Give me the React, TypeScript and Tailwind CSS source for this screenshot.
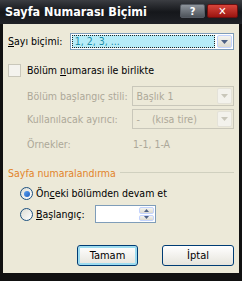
import React from 'react';

const font = { fontFamily: '"DejaVu Sans Condensed", "Liberation Sans", sans-serif' };

function Arrow({ disabled = false }: { disabled?: boolean }) {
  return (
    <div
      className={`w-[15px] h-full flex items-center justify-center rounded-[2px] border ${
        disabled ? 'border-[#e4e2d8] bg-[#f3f2ec]' : 'border-[#c3d3fd] bg-gradient-to-b from-[#f4f4f0] to-[#dcdad0]'
      }`}
    >
      <svg width="7" height="4" viewBox="0 0 7 4">
        <path d="M0 0h7L3.5 4z" fill={disabled ? '#c9c7ba' : '#4d6185'} />
      </svg>
    </div>
  );
}

function DisabledSelect({ text }: { text: string }) {
  return (
    <div className="w-[102px] h-[20px] border border-[#c9c7ba] bg-[#ece9d8] flex items-center p-[1px]">
      <span className="flex-1 pl-[2px] text-[#aca899] whitespace-pre">{text}</span>
      <Arrow disabled />
    </div>
  );
}

export default function App() {
  return (
    <div className="w-[242px] h-[281px] bg-[#111] flex flex-col text-[10.5px] leading-none overflow-hidden whitespace-nowrap" style={font}>
      {/* title bar */}
      <div className="h-[24px] flex items-center px-[5px] bg-gradient-to-b from-[#3b3d42] via-[#15171b] to-[#202227]">
        <span className="flex-1 text-white font-bold text-[12.5px]">Sayfa Numarası Biçimi</span>
        <div className="flex gap-[2px] mb-[2px] mr-[-1px]">
          <div className="w-[25px] h-[14px] rounded-[2px] border border-[#555a62] bg-gradient-to-b from-[#8e949b] to-[#4e545b] flex items-center justify-center text-white font-bold text-[11px]">
            ?
          </div>
          <div className="w-[31px] h-[14px] rounded-[2px] border border-[#6a1010] bg-gradient-to-b from-[#d8443a] to-[#9b1410] flex items-center justify-center text-white font-bold text-[11px]">
            ✕
          </div>
        </div>
      </div>

      {/* body */}
      <div className="mx-[3px] h-[249px] bg-[#ece9d8] text-black flex flex-col px-[5px]">
        <div className="flex items-center mt-[9px] h-[17px]">
          <span className="w-[62px]"><u>S</u>ayı biçimi:</span>
          <div className="w-[165px] h-[17px] border border-[#7f9db9] bg-white flex items-center p-[1px]">
            <div className="flex-1 h-full bg-[#b6ecf8] border border-dotted border-[#222] flex items-center pl-[2px] text-[#1f8fa9]">
              1, 2, 3, ...
            </div>
            <div className="ml-[2px] h-full">
              <Arrow />
            </div>
          </div>
        </div>

        <div className="flex items-center mt-[14px] gap-[6px]">
          <div className="w-[13px] h-[13px] border border-[#c9c7ba] bg-[#f4f3ee]" />
          <span>
            Bölüm <u>n</u>umarası ile birlikte
          </span>
        </div>

        <div className="pl-[19px] mt-[9px] flex flex-col gap-[3px] text-[#aca899]">
          <div className="flex items-center">
            <span className="w-[106px]">Bölüm başlangıç stili:</span>
            <DisabledSelect text="Başlık 1" />
          </div>
          <div className="flex items-center">
            <span className="w-[106px]">Kullanılacak ayırıcı:</span>
            <DisabledSelect text={'-    (kısa tire)'} />
          </div>
          <div className="flex items-center mt-[7px]">
            <span className="w-[106px]">Örnekler:</span>
            <span>1-1, 1-A</span>
          </div>
        </div>

        <div className="flex items-center mt-[18px] gap-[4px]">
          <span className="text-[#e2842b]">Sayfa numaralandırma</span>
          <div className="flex-1 h-px bg-[#d0d0bf]" />
        </div>

        <div className="flex items-center mt-[9px] pl-[12px] gap-[3px]">
          <div className="w-[13px] h-[13px] rounded-full border border-[#1c5180] bg-gradient-to-br from-[#dcdcd4] to-white flex items-center justify-center">
            <div className="w-[6px] h-[6px] rounded-full bg-gradient-to-br from-[#5aa0f0] to-[#1f5fc0]" />
          </div>
          <span>
            Ön<u>c</u>eki bölümden devam et
          </span>
        </div>

        <div className="flex items-center mt-[5px] pl-[12px] gap-[3px]">
          <div className="w-[13px] h-[13px] rounded-full border border-[#1c5180] bg-gradient-to-br from-[#dcdcd4] to-white" />
          <span className="w-[56px]">
            <u>B</u>aşlangıç:
          </span>
          <div className="w-[61px] h-[18px] border border-[#7f9db9] bg-white flex justify-end p-[1px]">
            <div className="w-[15px] flex flex-col gap-[1px]">
              <div className="flex-1 rounded-[2px] border border-[#c3d3fd] bg-gradient-to-b from-[#f4f4f0] to-[#dcdad0] flex items-center justify-center">
                <svg width="5" height="3" viewBox="0 0 5 3"><path d="M0 3h5L2.5 0z" fill="#4d6185" /></svg>
              </div>
              <div className="flex-1 rounded-[2px] border border-[#c3d3fd] bg-gradient-to-b from-[#f4f4f0] to-[#dcdad0] flex items-center justify-center">
                <svg width="5" height="3" viewBox="0 0 5 3"><path d="M0 0h5L2.5 3z" fill="#4d6185" /></svg>
              </div>
            </div>
          </div>
        </div>

        <div className="flex justify-end gap-[24px] mt-[22px]">
          <button className="w-[61px] h-[21px] rounded-[3px] border border-[#003c74] bg-gradient-to-b from-white to-[#e6e4dc] shadow-[inset_0_0_0_2px_#9ddcf0] text-[11px]">
            Tamam
          </button>
          <button className="w-[72px] h-[21px] rounded-[3px] border border-[#003c74] bg-gradient-to-b from-white to-[#e6e4dc] text-[11px]">
            İptal
          </button>
        </div>
      </div>
    </div>
  );
}
